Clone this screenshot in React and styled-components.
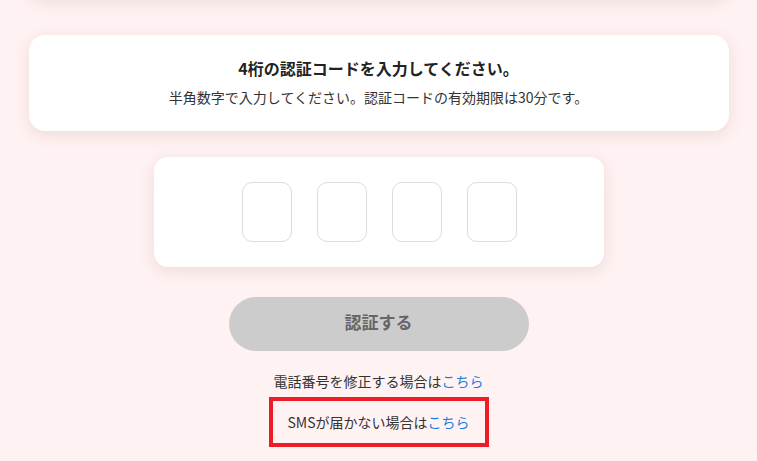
import React from 'react'
import styled, { createGlobalStyle } from 'styled-components'

const GlobalStyle = createGlobalStyle`
  html, body {
    margin: 0;
    padding: 0;
    background: #fff2f2;
    font-family: "Noto Sans CJK JP", "Noto Sans", sans-serif;
    color: #333;
  }
`

const Page = styled.main`
  width: 757px;
  height: 461px;
  overflow: hidden;
  display: flex;
  flex-direction: column;
  align-items: center;
`

const Card = styled.section`
  background: #fff;
  border-radius: 16px;
  box-shadow: 0 4px 16px rgba(120, 60, 60, 0.13);
`

const PrevCard = styled(Card)`
  width: 700px;
  height: 60px;
  margin-top: -62px;
  flex-shrink: 0;
`

const NoticeCard = styled(Card)`
  width: 700px;
  margin-top: 37px;
  padding: 20px 0 24px;
  text-align: center;
`

const Title = styled.h1`
  margin: 0 0 6px;
  font-size: 16px;
  line-height: 26px;
  font-weight: 700;
  color: #222;
`

const Note = styled.p`
  margin: 0;
  font-size: 14px;
  line-height: 20px;
`

const CodeCard = styled(Card)`
  width: 450px;
  box-sizing: border-box;
  margin-top: 26px;
  padding: 25px 0 25px 1px;
  border-radius: 14px;
  display: flex;
  justify-content: center;
  gap: 25px;
`

const Digit = styled.input`
  width: 50px;
  height: 60px;
  box-sizing: border-box;
  border: 1px solid #dcdcdc;
  border-radius: 10px;
  background: #fff;
  text-align: center;
  font-size: 24px;
  outline: none;
`

const Submit = styled.button`
  margin-top: 30px;
  width: 300px;
  height: 54px;
  padding: 0 0 6px;
  border: none;
  border-radius: 27px;
  background: #cccccc;
  color: #666;
  font-family: inherit;
  font-size: 17px;
  font-weight: 700;
`

const LinkLine = styled.p`
  margin: 20px 0 0;
  font-size: 14px;
  line-height: 20px;
  text-align: center;
`

const Highlight = styled.div`
  margin-top: 6px;
  width: 220px;
  box-sizing: border-box;
  border: 4px solid #ee1c25;
  padding: 11px 0;
  display: flex;
  justify-content: center;

  ${LinkLine} {
    margin: 0;
  }
`

const Here = styled.a`
  color: #1a7fe0;
  text-decoration: none;
`

export default function App() {
  return (
    <>
      <GlobalStyle />
      <Page>
        <PrevCard />
        <NoticeCard>
          <Title>4桁の認証コードを入力してください。</Title>
          <Note>半角数字で入力してください。認証コードの有効期限は30分です。</Note>
        </NoticeCard>
        <CodeCard>
          {[0, 1, 2, 3].map((i) => (
            <Digit key={i} inputMode="numeric" maxLength={1} />
          ))}
        </CodeCard>
        <Submit disabled>認証する</Submit>
        <LinkLine>
          電話番号を修正する場合は<Here href="#">こちら</Here>
        </LinkLine>
        <Highlight>
          <LinkLine>
            SMSが届かない場合は<Here href="#">こちら</Here>
          </LinkLine>
        </Highlight>
      </Page>
    </>
  )
}
